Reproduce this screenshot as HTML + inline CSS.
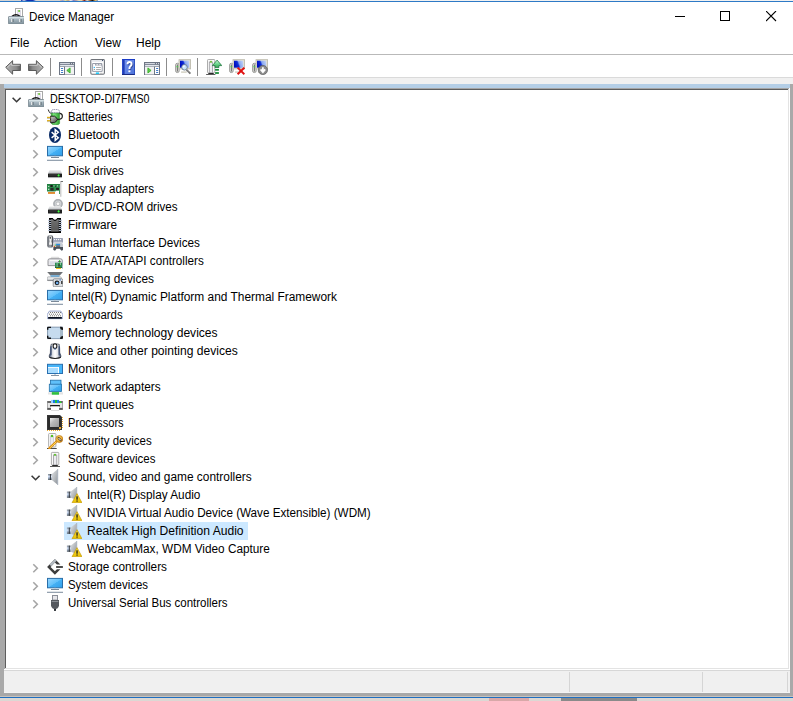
<!DOCTYPE html>
<html><head><meta charset="utf-8">
<style>
html,body{margin:0;padding:0;width:793px;height:701px;overflow:hidden;background:#fff;position:relative;font-family:"Liberation Sans",sans-serif;font-size:12px;color:#000}
div,svg{position:absolute}
.t{white-space:nowrap;transform-origin:0 0;line-height:18px;height:18px;color:#000}
.sel{left:64px;width:184px;height:18px;background:#cce8ff}
.ic{width:16px;height:16px}
.ic svg{position:absolute;left:0;top:0}
</style></head><body>
<svg width="0" height="0" style="position:absolute;left:0;top:0"><defs>
<linearGradient id="tb" x1="0" y1="0" x2="0" y2="1"><stop offset="0" stop-color="#c9d6dc"/><stop offset="0.35" stop-color="#a9b9c2"/><stop offset="1" stop-color="#7f909a"/></linearGradient>
<linearGradient id="bg1" x1="0" y1="0" x2="1" y2="0"><stop offset="0" stop-color="#2aa02a"/><stop offset="0.3" stop-color="#7de87d"/><stop offset="1" stop-color="#2f9f2f"/></linearGradient>
<linearGradient id="pg1" x1="0" y1="0" x2="1" y2="1"><stop offset="0" stop-color="#d8d8d8"/><stop offset="1" stop-color="#3a3a3a"/></linearGradient>
<linearGradient id="mg" x1="0" y1="0" x2="1" y2="1"><stop offset="0" stop-color="#9ad6ff"/><stop offset="0.5" stop-color="#60c0fa"/><stop offset="0.52" stop-color="#45b0f4"/><stop offset="1" stop-color="#2f9fea"/></linearGradient>
<linearGradient id="drv" x1="0" y1="0" x2="0" y2="1"><stop offset="0" stop-color="#f4f4f4"/><stop offset="1" stop-color="#b8bcc0"/></linearGradient>
<linearGradient id="chipg" x1="0" y1="0" x2="1" y2="1"><stop offset="0" stop-color="#f0f0f0"/><stop offset="0.4" stop-color="#b8b8b8"/><stop offset="1" stop-color="#9a9a9a"/></linearGradient>
<linearGradient id="cone" x1="0" y1="0" x2="1" y2="1"><stop offset="0" stop-color="#e4e6e8"/><stop offset="0.5" stop-color="#b8bcc0"/><stop offset="1" stop-color="#8a9096"/></linearGradient>
<linearGradient id="rear" x1="0" y1="0" x2="0" y2="1"><stop offset="0" stop-color="#7a848e"/><stop offset="0.4" stop-color="#d8e4f8"/><stop offset="0.55" stop-color="#b8c8e0"/><stop offset="1" stop-color="#5a646e"/></linearGradient>
<linearGradient id="warn" x1="0" y1="0" x2="0" y2="1"><stop offset="0" stop-color="#f8e040"/><stop offset="1" stop-color="#e8c000"/></linearGradient>
<linearGradient id="usbg" x1="0" y1="0" x2="1" y2="0"><stop offset="0" stop-color="#3c3c3c"/><stop offset="0.5" stop-color="#8a8a8a"/><stop offset="1" stop-color="#3c3c3c"/></linearGradient>
<linearGradient id="gold" x1="0" y1="0" x2="1" y2="1"><stop offset="0" stop-color="#ffe070"/><stop offset="1" stop-color="#e09010"/></linearGradient>
<linearGradient id="tower" x1="0" y1="0" x2="1" y2="0"><stop offset="0" stop-color="#d8d8d8"/><stop offset="0.5" stop-color="#fafafa"/><stop offset="1" stop-color="#c0c0c0"/></linearGradient>
<linearGradient id="scr" x1="0" y1="0.3" x2="1" y2="0"><stop offset="0" stop-color="#0010c0"/><stop offset="0.35" stop-color="#1030d8"/><stop offset="0.5" stop-color="#8aa8f0"/><stop offset="1" stop-color="#c8d8f8"/></linearGradient>
<linearGradient id="grarr" x1="0" y1="0" x2="0" y2="1"><stop offset="0" stop-color="#d0f8dc"/><stop offset="0.5" stop-color="#70d890"/><stop offset="1" stop-color="#30a050"/></linearGradient>
<linearGradient id="arrg" x1="0" y1="0" x2="1" y2="0"><stop offset="0" stop-color="#b4b4b4"/><stop offset="0.7" stop-color="#8a8a8a"/><stop offset="1" stop-color="#5a5a5a"/></linearGradient>
<linearGradient id="helpg" x1="0" y1="0" x2="1" y2="1"><stop offset="0" stop-color="#7a98f0"/><stop offset="1" stop-color="#4a70d8"/></linearGradient>
<linearGradient id="mouseg" x1="0" y1="0" x2="1" y2="0"><stop offset="0" stop-color="#3a4a6a"/><stop offset="0.3" stop-color="#e4e6ea"/><stop offset="0.5" stop-color="#ffffff"/><stop offset="0.7" stop-color="#e4e6ea"/><stop offset="1" stop-color="#3a4a6a"/></linearGradient>
<linearGradient id="hidm" x1="0" y1="0" x2="1" y2="0"><stop offset="0" stop-color="#5a5e66"/><stop offset="0.5" stop-color="#a0a4aa"/><stop offset="1" stop-color="#3a3e46"/></linearGradient>
<linearGradient id="fwg" x1="0" y1="0" x2="0" y2="1"><stop offset="0" stop-color="#8a8a8a"/><stop offset="0.2" stop-color="#6a6a6a"/><stop offset="0.85" stop-color="#5a5a5a"/><stop offset="1" stop-color="#8a8a8a"/></linearGradient>
<linearGradient id="stg" x1="0.2" y1="0.1" x2="0.5" y2="0.4"><stop offset="0" stop-color="#e0e6ec"/><stop offset="0.4" stop-color="#8a8e92"/><stop offset="0.6" stop-color="#3c3c3c"/><stop offset="1" stop-color="#3a3a3a"/></linearGradient>
</defs></svg>
<!-- background row 0 -->
<div style="left:0;top:0;width:793px;height:1px;background:#f2f2f2"></div>
<div style="left:0;top:0;width:60px;height:1px;background:#d4d4d4"></div>
<div style="left:21px;top:0;width:15px;height:1px;background:linear-gradient(90deg,#1030b0,#c8d0e0 20%,#1030b0 40%,#1030b0 80%,#d0d8e8)"></div>
<div style="left:60px;top:0;width:38px;height:1px;background:linear-gradient(90deg,#e0c0a0,#a0a0d0,#e0e0a0,#c0a080,#f0f0f0,#8080c0,#c0a0a0,#e0e0c0,#f0d0a0,#802020,#e0e0d0,#a06030,#101010,#e0b060,#80a0c0)"></div>
<div style="left:0;top:1px;width:793px;height:1px;background:#2e7ac6"></div>
<!-- title bar -->
<div class="ic" style="left:8px;top:8px"><svg width="16" height="16" viewBox="0 0 16 16">
<rect x="7.5" y="0.5" width="7" height="8" fill="#fff" stroke="#a8a8a8"/>
<rect x="9.6" y="2.6" width="3" height="5.6" fill="#ece8f4" stroke="#c8c4d4" stroke-width="0.5"/>
<circle cx="11.1" cy="3" r="1.05" fill="#70c838"/>
<path d="M4 8.2 Q8 5.2 12 8.2" fill="none" stroke="#151515" stroke-width="1.4"/>
<rect x="0.5" y="8.5" width="15.5" height="7.5" rx="0.5" fill="url(#tb)" stroke="#7a8890" stroke-width="0.8"/>
<rect x="1" y="9" width="15" height="1.4" fill="#dbe6ea" opacity="0.8"/>
<rect x="3.2" y="11" width="1.4" height="3" fill="#f4f4f4"/>
<rect x="11.2" y="11" width="1.4" height="3" fill="#f4f4f4"/>
<rect x="4.6" y="11" width="0.8" height="3" fill="#4a5860"/>
<rect x="12.6" y="11" width="0.8" height="3" fill="#4a5860"/>
</svg></div>
<div class="t" style="left:29px;top:8px;transform:scaleX(0.973)">Device Manager</div>
<div style="left:675px;top:16px;width:10px;height:1px;background:#000"></div>
<svg style="left:720px;top:11px" width="11" height="11"><rect x="0.5" y="0.5" width="9" height="9" fill="none" stroke="#000" stroke-width="1"/></svg>
<svg style="left:766px;top:11px" width="11" height="11"><path d="M0 0 L10 10 M10 0 L0 10" stroke="#000" stroke-width="1.1"/></svg>
<!-- menu -->
<div class="t" style="left:10px;top:34px">File</div>
<div class="t" style="left:44px;top:34px">Action</div>
<div class="t" style="left:95px;top:34px">View</div>
<div class="t" style="left:136px;top:34px">Help</div>
<div style="left:0;top:54px;width:793px;height:1px;background:#b9b9b9"></div>
<!-- toolbar -->
<svg style="left:5px;top:60px" width="16" height="15" viewBox="0 0 16 15"><path d="M0.7 7.3 L7.6 0.7 L7.6 4.3 L15.3 4.3 Q15.9 4.3 15.9 5 L15.9 9.8 Q15.9 10.5 15.3 10.5 L7.6 10.5 L7.6 14.2 Z" fill="url(#arrg)" stroke="#5a5a5a" stroke-width="1" stroke-linejoin="round"/><path d="M2.3 7.3 L6.6 3.2 L6.6 5.3 L14.8 5.3" fill="none" stroke="#e0e0e0" stroke-width="0.7"/></svg><svg style="left:28px;top:60px" width="16" height="15" viewBox="0 0 16 15"><g transform="translate(16,0) scale(-1,1)"><path d="M0.7 7.3 L7.6 0.7 L7.6 4.3 L15.3 4.3 Q15.9 4.3 15.9 5 L15.9 9.8 Q15.9 10.5 15.3 10.5 L7.6 10.5 L7.6 14.2 Z" fill="url(#arrg)" stroke="#5a5a5a" stroke-width="1" stroke-linejoin="round"/><path d="M2.3 7.3 L6.6 3.2 L6.6 5.3 L14.8 5.3" fill="none" stroke="#e0e0e0" stroke-width="0.7"/></g></svg><div style="left:50px;top:58px;width:1px;height:18px;background:#8c8c8c"></div><svg style="left:59px;top:62px" width="16" height="13" viewBox="0 0 16 13"><rect x="0.5" y="0.5" width="15" height="12" fill="#fff" stroke="#6e7684"/>
<rect x="1" y="1" width="14" height="3.8" fill="#6e7684"/>
<rect x="1.1" y="1.1" width="9.8" height="1" fill="#dfe3ea"/><rect x="12" y="1.1" width="1" height="1" fill="#dfe3ea"/><rect x="14" y="1.1" width="1" height="1" fill="#dfe3ea"/>
<rect x="1.1" y="2.9" width="13.8" height="1.3" fill="#e4e8ee"/>
<rect x="5" y="4.8" width="1" height="7.7" fill="#6e7684"/>
<rect x="6" y="4.8" width="9" height="7.7" fill="#f2f2f2"/>
<rect x="1.9" y="6" width="2.3" height="1" rx="0.5" fill="#3a78c8"/><rect x="1.9" y="8" width="2.3" height="1" rx="0.5" fill="#3a78c8"/><rect x="1.9" y="10" width="2.3" height="1" rx="0.5" fill="#3a78c8"/>
<path d="M7.8 8.45 L11.1 5.9 L11.1 11 Z" fill="#60c850" stroke="#30b020" stroke-width="0.8" stroke-linejoin="round"/></svg><div style="left:81px;top:58px;width:1px;height:18px;background:#8c8c8c"></div><svg style="left:90px;top:59px" width="15" height="16" viewBox="0 0 15 16"><rect x="0.8" y="0.5" width="13.6" height="14.7" rx="1.2" fill="#fff" stroke="#6e7278" stroke-width="1.1"/>
<rect x="1.4" y="1.3" width="12.4" height="1.3" fill="#dde0e6"/><rect x="12" y="0.9" width="1.1" height="1.1" fill="#405070"/>
<path d="M2.6 4.5 L11.9 4.5 L11.9 6.6 L12.2 6.6 L12.2 12.4 L2.6 12.4 Z" fill="#fff" stroke="#9a9eaa" stroke-width="1"/>
<rect x="5.1" y="4.5" width="6.8" height="2.1" fill="#9a9eaa"/>
<rect x="6.3" y="5.3" width="1.8" height="1" fill="#fff"/><rect x="9.2" y="5.3" width="1.8" height="1" fill="#fff"/>
<circle cx="4.3" cy="8.5" r="0.65" fill="#10b0f8"/><rect x="6.1" y="8.1" width="4.8" height="0.8" fill="#9a9a9a"/>
<circle cx="4.3" cy="10.5" r="0.55" fill="#6a6a6a"/><rect x="6.1" y="10.1" width="4.8" height="0.8" fill="#9a9a9a"/>
<rect x="5.9" y="13.4" width="3.2" height="1.6" fill="#20c8f8"/><rect x="10" y="13.8" width="2.6" height="1" fill="#b8b8b8"/></svg><div style="left:112px;top:58px;width:1px;height:18px;background:#8c8c8c"></div><svg style="left:122px;top:59px" width="13" height="16" viewBox="0 0 13 16"><rect x="0" y="0" width="13" height="16" fill="url(#helpg)"/>
<rect x="0" y="0" width="2.7" height="16" fill="#2848c8"/><rect x="1.2" y="0" width="1" height="16" fill="#1c34a0" opacity="0.6"/>
<rect x="0" y="0" width="13" height="1" fill="#1a3cc8"/><rect x="0" y="15" width="13" height="1" fill="#1a2a80"/>
<rect x="12.3" y="0" width="0.7" height="16" fill="#2040b0"/>
<path d="M5.8 5.6 Q5.8 3.3 7.8 3.3 Q9.9 3.3 9.9 5.4 Q9.9 6.8 8.5 7.7 Q7.7 8.3 7.7 10.3" fill="none" stroke="#1a2a70" stroke-width="1.9" transform="translate(0.6,0.6)" opacity="0.6"/>
<path d="M5.5 5.3 Q5.5 3 7.5 3 Q9.6 3 9.6 5.1 Q9.6 6.5 8.2 7.4 Q7.4 8 7.4 10" fill="none" stroke="#fff" stroke-width="1.9"/>
<rect x="6.4" y="11.4" width="2" height="1.8" fill="#fff"/></svg><svg style="left:144px;top:62px" width="16" height="13" viewBox="0 0 16 13"><rect x="0.5" y="0.5" width="15" height="12" fill="#fff" stroke="#6e7684"/>
<rect x="1" y="1" width="14" height="3.8" fill="#6e7684"/>
<rect x="1.1" y="1.1" width="9.8" height="1" fill="#dfe3ea"/><rect x="12" y="1.1" width="1" height="1" fill="#dfe3ea"/><rect x="14" y="1.1" width="1" height="1" fill="#dfe3ea"/>
<rect x="1.1" y="2.9" width="13.8" height="1.3" fill="#e4e8ee"/>
<rect x="10" y="4.8" width="1" height="7.7" fill="#6e7684"/>
<rect x="1" y="4.8" width="9" height="7.7" fill="#f2f2f2"/>
<rect x="12" y="6" width="2.3" height="1" rx="0.5" fill="#3a78c8"/><rect x="12" y="8" width="2.3" height="1" rx="0.5" fill="#3a78c8"/><rect x="12" y="10" width="2.3" height="1" rx="0.5" fill="#3a78c8"/>
<path d="M7.1 8.45 L3.9 5.9 L3.9 11 Z" fill="#60c850" stroke="#30b020" stroke-width="0.8" stroke-linejoin="round"/></svg><div style="left:166px;top:58px;width:1px;height:18px;background:#8c8c8c"></div><svg style="left:175px;top:59px" width="16" height="16" viewBox="0 0 16 16"><rect x="0.6" y="4.3" width="3.6" height="9.2" rx="1.6" fill="#dcdcd8" stroke="#8a8a88" stroke-width="0.8"/><rect x="1.9" y="5.5" width="1" height="7" fill="#707070"/><rect x="1.4" y="7.3" width="2" height="0.9" fill="#40e040"/>
<rect x="4" y="0.7" width="11.6" height="9.2" fill="#e4e2d4" stroke="#b8b6a8" stroke-width="0.8"/><rect x="5" y="1.7" width="9.2" height="7" fill="url(#scr)"/>
<rect x="6.1" y="12.4" width="5.6" height="1.4" fill="#d0cec0"/>
<path d="M11.6 10.8 L15.4 14.6" stroke="#6a6a6a" stroke-width="1.8"/><path d="M12.2 11.6 L14.8 14" stroke="#e0e0e0" stroke-width="0.5" stroke-dasharray="0.8 0.8"/>
<circle cx="9.5" cy="8.3" r="2.8" fill="#c8e4fa" stroke="#6a7a8a" stroke-width="0.9"/><circle cx="8.7" cy="7.5" r="1.1" fill="#fff" opacity="0.8"/></svg><div style="left:197px;top:58px;width:1px;height:18px;background:#8c8c8c"></div><svg style="left:206px;top:59px" width="16" height="16" viewBox="0 0 16 16"><rect x="1.5" y="0.5" width="7.3" height="13.3" rx="0.8" fill="#fafafa" stroke="#a4a4a4" stroke-width="0.9"/>
<rect x="3.3" y="3" width="3.2" height="10.8" fill="#ececf0" stroke="#9a9a9e" stroke-width="0.8"/>
<circle cx="5" cy="2.7" r="1" fill="#70c030"/>
<rect x="2.3" y="14" width="5.4" height="1" fill="#2a2a2a"/><rect x="0.1" y="15" width="9.3" height="0.9" fill="#4a4a4a"/>
<path d="M11.1 1.1 L15.8 6.6 L12.9 6.6 L12.9 8.6 L9.1 8.6 L9.1 6.6 L6.4 6.6 Z" fill="url(#grarr)" stroke="#106a30" stroke-width="0.7" stroke-linejoin="round"/>
<rect x="9.1" y="10" width="3.8" height="1.7" fill="#188a38"/><rect x="9.1" y="13.1" width="3.8" height="1.8" fill="#188a38"/></svg><svg style="left:229px;top:59px" width="16" height="16" viewBox="0 0 16 16"><rect x="0.6" y="4.3" width="3.6" height="9.2" rx="1.6" fill="#dcdcd8" stroke="#8a8a88" stroke-width="0.8"/><rect x="1.9" y="5.5" width="1" height="7" fill="#707070"/><rect x="1.4" y="7.3" width="2" height="0.9" fill="#40e040"/>
<rect x="4" y="0.7" width="11.6" height="9.2" fill="#e4e2d4" stroke="#b8b6a8" stroke-width="0.8"/><rect x="5" y="1.7" width="9.2" height="7" fill="url(#scr)"/>
<rect x="6.1" y="12.4" width="5.6" height="1.4" fill="#d0cec0"/>
<path d="M8.6 8.6 L15.4 15.2 M15.4 8.6 L8.6 15.2" stroke="#e01010" stroke-width="2"/></svg><svg style="left:252px;top:59px" width="16" height="16" viewBox="0 0 16 16"><rect x="0.6" y="4.3" width="3.6" height="9.2" rx="1.6" fill="#dcdcd8" stroke="#8a8a88" stroke-width="0.8"/><rect x="1.9" y="5.5" width="1" height="7" fill="#707070"/><rect x="1.4" y="7.3" width="2" height="0.9" fill="#40e040"/>
<rect x="4" y="0.7" width="11.6" height="9.2" fill="#e4e2d4" stroke="#b8b6a8" stroke-width="0.8"/><rect x="5" y="1.7" width="9.2" height="7" fill="url(#scr)"/>
<rect x="6.1" y="12.4" width="5.6" height="1.4" fill="#d0cec0"/>
<circle cx="10.9" cy="11" r="4.6" fill="#8c8c8c" stroke="#5a5a5a" stroke-width="0.7"/>
<path d="M10.9 8.2 L10.9 12 M8.6 10.4 L10.9 13.2 L13.2 10.4" fill="none" stroke="#fff" stroke-width="1.7"/></svg>
<div style="left:0;top:77px;width:793px;height:1px;background:#dadada"></div>
<div style="left:0;top:78px;width:793px;height:6px;background:#f0f0f0"></div>
<div style="left:0;top:84px;width:4px;height:609px;background:#a9a9a9"></div>
<div style="left:790px;top:84px;width:3px;height:609px;background:#a9a9a9"></div>
<div style="left:4px;top:84px;width:786px;height:4px;background:#b4cee6"></div>
<div style="left:4px;top:88px;width:785px;height:1px;background:#a4a4a4"></div>
<div style="left:4px;top:88px;width:1px;height:582px;background:#a9a9a9"></div>
<!-- tree frame -->
<div style="left:5px;top:89px;width:783px;height:1px;background:#5e5e5e"></div>
<div style="left:5px;top:89px;width:1px;height:580px;background:#5e5e5e"></div>
<div style="left:6px;top:90px;width:782px;height:578px;background:#fff"></div>
<div style="left:788px;top:89px;width:1px;height:580px;background:#e3e3e3"></div>
<div style="left:5px;top:668px;width:784px;height:1px;background:#e3e3e3"></div>
<div style="left:789px;top:88px;width:1px;height:582px;background:#fff"></div>
<div style="left:4px;top:669px;width:786px;height:1px;background:#fff"></div>
<!-- tree rows -->
<svg class="chev" style="left:12px;top:97px" width="10" height="7" viewBox="0 0 10 7"><path d="M0.6 0.7 L4.6 4.7 L8.6 0.7" fill="none" stroke="#3a3a3a" stroke-width="1.6"/></svg><div class="ic" style="left:28px;top:91px"><svg width="16" height="16" viewBox="0 0 16 16">
<rect x="7.5" y="0.5" width="7" height="8" fill="#fff" stroke="#a8a8a8"/>
<rect x="9.6" y="2.6" width="3" height="5.6" fill="#ece8f4" stroke="#c8c4d4" stroke-width="0.5"/>
<circle cx="11.1" cy="3" r="1.05" fill="#70c838"/>
<path d="M4 8.2 Q8 5.2 12 8.2" fill="none" stroke="#151515" stroke-width="1.4"/>
<rect x="0.5" y="8.5" width="15.5" height="7.5" rx="0.5" fill="url(#tb)" stroke="#7a8890" stroke-width="0.8"/>
<rect x="1" y="9" width="15" height="1.4" fill="#dbe6ea" opacity="0.8"/>
<rect x="3.2" y="11" width="1.4" height="3" fill="#f4f4f4"/>
<rect x="11.2" y="11" width="1.4" height="3" fill="#f4f4f4"/>
<rect x="4.6" y="11" width="0.8" height="3" fill="#4a5860"/>
<rect x="12.6" y="11" width="0.8" height="3" fill="#4a5860"/>
</svg></div><div class="t" style="left:49.5px;top:90px;transform:scaleX(0.8899)">DESKTOP-DI7FMS0</div>
<svg class="chev" style="left:32px;top:113px" width="7" height="10" viewBox="0 0 7 10"><path d="M1.3 1.3 L5.3 5.3 L1.3 9.3" fill="none" stroke="#a6a6a6" stroke-width="1.6"/></svg><div class="ic" style="left:47px;top:109px"><svg width="16" height="16" viewBox="0 0 16 16">
<path d="M1.2 0.5 Q1.8 3 3.8 4.6" fill="none" stroke="#2a2a2a" stroke-width="1"/>
<path d="M4.2 3.6 L12.6 3.6 L12.6 14.2 Q12.6 15.7 8.5 15.7 Q4.4 15.7 4.4 14.2 Z" fill="url(#bg1)" stroke="#2a8a2a" stroke-width="0.5"/>
<path d="M4.2 2.6 Q4.2 0.4 8.4 0.4 Q12.6 0.4 12.6 2.6 L12.6 3.8 L4.2 3.8 Z" fill="#fbfaff" stroke="#3a3a6a" stroke-width="0.6" stroke-dasharray="1.2 0.6"/>
<path d="M10.4 10.4 L13 10.2 Q15.6 9.6 15.3 6.6 Q15 4.4 12.6 4.4" fill="none" stroke="#1e1e1e" stroke-width="1.2"/>
<path d="M3.6 7.2 L7.6 7.2 L10 9.4 L10.6 10.4 L10 11.5 L7.6 13.7 L3.6 13.7 Z" fill="url(#pg1)" stroke="#0e0e0e" stroke-width="0.9"/>
<rect x="0" y="7.8" width="3.4" height="1.5" fill="#e0b020"/>
<rect x="0" y="11" width="3.4" height="1.5" fill="#e0b020"/>
<rect x="0" y="9.3" width="3.4" height="0.6" fill="#8090b0" opacity="0.6"/>
<rect x="0" y="12.5" width="3.4" height="0.6" fill="#8090b0" opacity="0.6"/>
</svg></div><div class="t" style="left:68px;top:108px;transform:scaleX(0.9417)">Batteries</div>
<svg class="chev" style="left:32px;top:131px" width="7" height="10" viewBox="0 0 7 10"><path d="M1.3 1.3 L5.3 5.3 L1.3 9.3" fill="none" stroke="#a6a6a6" stroke-width="1.6"/></svg><div class="ic" style="left:47px;top:127px"><svg width="16" height="16" viewBox="0 0 16 16">
<ellipse cx="8" cy="8" rx="6" ry="8" fill="#082a66"/>
<path d="M4.6 5.1 L11.3 10.7 L8.2 13.4 L8.2 2.6 L11.3 5.3 L4.6 10.9" fill="none" stroke="#fff" stroke-width="1.45" stroke-linejoin="miter" stroke-miterlimit="3"/>
</svg></div><div class="t" style="left:68px;top:126px;transform:scaleX(1.0174)">Bluetooth</div>
<svg class="chev" style="left:32px;top:149px" width="7" height="10" viewBox="0 0 7 10"><path d="M1.3 1.3 L5.3 5.3 L1.3 9.3" fill="none" stroke="#a6a6a6" stroke-width="1.6"/></svg><div class="ic" style="left:47px;top:145px"><svg width="16" height="16" viewBox="0 0 16 16">
<rect x="0.5" y="1.4" width="15" height="9.4" fill="url(#mg)" stroke="#2a6ea8"/>
<rect x="7" y="10.9" width="2" height="1" fill="#c0c8d0"/>
<rect x="4" y="12" width="8" height="1" fill="#7a8898"/>
<rect x="0" y="14.3" width="16" height="0.8" fill="#d4dae0"/>
<rect x="0" y="15.1" width="16" height="0.9" fill="#8a98a8"/>
</svg></div><div class="t" style="left:68px;top:144px;transform:scaleX(1.0268)">Computer</div>
<svg class="chev" style="left:32px;top:167px" width="7" height="10" viewBox="0 0 7 10"><path d="M1.3 1.3 L5.3 5.3 L1.3 9.3" fill="none" stroke="#a6a6a6" stroke-width="1.6"/></svg><div class="ic" style="left:47px;top:163px"><svg width="16" height="16" viewBox="0 0 16 16">
<path d="M2.5 7 L13.5 7 L15 10.5 L1 10.5 Z" fill="url(#drv)"/>
<rect x="1" y="10.5" width="14" height="4" rx="0.6" fill="#1e1e1e"/>
<rect x="2" y="11.4" width="8" height="0.5" fill="#444"/><rect x="2" y="12.6" width="8" height="0.5" fill="#444"/>
<circle cx="11.6" cy="12.4" r="1.1" fill="#40ff40"/>
<rect x="1" y="14.5" width="14" height="0.6" fill="#c8ccd0"/>
</svg></div><div class="t" style="left:68px;top:162px;transform:scaleX(0.9491)">Disk drives</div>
<svg class="chev" style="left:32px;top:185px" width="7" height="10" viewBox="0 0 7 10"><path d="M1.3 1.3 L5.3 5.3 L1.3 9.3" fill="none" stroke="#a6a6a6" stroke-width="1.6"/></svg><div class="ic" style="left:47px;top:181px"><svg width="16" height="16" viewBox="0 0 16 16">
<rect x="13.1" y="0.6" width="2" height="15.1" fill="#e8e8e8"/>
<rect x="13.1" y="0.6" width="0.8" height="15.1" fill="#c8c8c8"/>
<rect x="13.6" y="0" width="2.4" height="1" fill="#707070"/>
<path d="M0 3 L12.9 3 L12.9 12.9 L12 12.9 L12 9.7 L9 9.7 L8.4 10.6 L0 10.6 Z" fill="#2a8a4a"/>
<rect x="0" y="3" width="12.9" height="0.8" fill="#1e7a3a"/>
<rect x="1" y="11" width="7" height="1.9" fill="#e08a30"/>
<rect x="3.4" y="4" width="2.3" height="2" fill="#1a1a1a"/>
<rect x="3.4" y="6.9" width="3.2" height="2.8" fill="#2a2a2a"/>
<rect x="9.1" y="6.9" width="2.9" height="2" fill="#1e1e1e"/>
<rect x="8" y="4.8" width="0.9" height="0.9" fill="#1a1a1a"/>
<g fill="#c8e8d0"><rect x="1.1" y="4.9" width="1.2" height="1.1"/><rect x="1.1" y="7.7" width="1.2" height="1.3"/><rect x="6.6" y="4.3" width="0.8" height="1.1"/><rect x="10" y="4.3" width="0.8" height="1.1"/></g>
</svg></div><div class="t" style="left:68px;top:180px;transform:scaleX(0.9621)">Display adapters</div>
<svg class="chev" style="left:32px;top:203px" width="7" height="10" viewBox="0 0 7 10"><path d="M1.3 1.3 L5.3 5.3 L1.3 9.3" fill="none" stroke="#a6a6a6" stroke-width="1.6"/></svg><div class="ic" style="left:47px;top:199px"><svg width="16" height="16" viewBox="0 0 16 16">
<circle cx="11" cy="4.8" r="4.5" fill="#b4b8bc" stroke="#8a8e92" stroke-width="0.5"/>
<circle cx="11" cy="4.8" r="3" fill="#d8dadc"/>
<circle cx="11" cy="4.8" r="1.9" fill="#eeeeee" stroke="#9a9ea2" stroke-width="0.5"/>
<circle cx="11" cy="4.8" r="0.9" fill="#fff"/>
<path d="M2.5 7.2 L13.5 7.2 L15 10.5 L1 10.5 Z" fill="url(#drv)"/>
<rect x="1" y="10.5" width="14" height="4" rx="0.6" fill="#1e1e1e"/>
<rect x="2" y="11.4" width="8" height="0.5" fill="#444"/><rect x="2" y="12.6" width="8" height="0.5" fill="#444"/>
<circle cx="11.6" cy="12.4" r="1.1" fill="#40ff40"/>
</svg></div><div class="t" style="left:68px;top:198px;transform:scaleX(0.9670)">DVD/CD-ROM drives</div>
<svg class="chev" style="left:32px;top:221px" width="7" height="10" viewBox="0 0 7 10"><path d="M1.3 1.3 L5.3 5.3 L1.3 9.3" fill="none" stroke="#a6a6a6" stroke-width="1.6"/></svg><div class="ic" style="left:47px;top:217px"><svg width="16" height="16" viewBox="0 0 16 16">
<path d="M2 0.9 L5.7 0.9 Q8 4.6 10.3 0.9 L14 0.9 L14 16 L2 16 Z" fill="#000"/>
<path d="M4.1 2.3 L5.3 2.3 Q8 5.8 10.7 2.3 L11.7 2.3 L11.7 14.6 L4.1 14.6 Z" fill="url(#fwg)"/>
<rect x="1" y="2.8" width="3.2" height="1" fill="#b8c4d8"/><rect x="11.8" y="2.8" width="3.2" height="1" fill="#b8c4d8"/><rect x="1" y="4.9" width="3.2" height="1" fill="#b8c4d8"/><rect x="11.8" y="4.9" width="3.2" height="1" fill="#b8c4d8"/><rect x="1" y="6.9" width="3.2" height="1" fill="#b8c4d8"/><rect x="11.8" y="6.9" width="3.2" height="1" fill="#b8c4d8"/><rect x="1" y="8.9" width="3.2" height="1" fill="#b8c4d8"/><rect x="11.8" y="8.9" width="3.2" height="1" fill="#b8c4d8"/><rect x="1" y="10.9" width="3.2" height="1" fill="#b8c4d8"/><rect x="11.8" y="10.9" width="3.2" height="1" fill="#b8c4d8"/><rect x="1" y="13.1" width="3.2" height="1" fill="#b8c4d8"/><rect x="11.8" y="13.1" width="3.2" height="1" fill="#b8c4d8"/></svg></div><div class="t" style="left:68px;top:216px;transform:scaleX(0.9800)">Firmware</div>
<svg class="chev" style="left:32px;top:239px" width="7" height="10" viewBox="0 0 7 10"><path d="M1.3 1.3 L5.3 5.3 L1.3 9.3" fill="none" stroke="#a6a6a6" stroke-width="1.6"/></svg><div class="ic" style="left:47px;top:235px"><svg width="16" height="16" viewBox="0 0 16 16">
<rect x="0.2" y="0.2" width="6" height="12.6" rx="2.4" fill="url(#hidm)"/>
<path d="M2.2 1.6 L4.8 1.6 Q5 5 4.3 6.5 Q5 8 5 9.8 L2 9.8 Q2 8 2.7 6.5 Q2 5 2.2 1.6 Z" fill="#f4f4f4"/>
<rect x="2.6" y="2.2" width="1.4" height="1.4" fill="#333"/>
<rect x="6" y="2.9" width="10" height="4.9" rx="0.8" fill="#9aa0b4"/>
<g fill="#fff"><circle cx="7.5" cy="4.6" r="0.7"/><circle cx="9.5" cy="4.6" r="0.7"/><circle cx="11.5" cy="4.6" r="0.7"/><circle cx="13.5" cy="4.6" r="0.7"/>
<path d="M7 7.5 L8 6.4 L9 7.5 L10 6.4 L11 7.5 L12 6.4 L13 7.5 L14 6.4 L15 7.5 Z"/></g>
<path d="M6.5 9.5 Q6.5 8 8 8 L14.5 8 Q16 8 16 9.5 L16 14.8 Q15.5 15.8 14.3 15.5 L12.8 13.8 L9.5 13.8 L8.2 15.5 Q7 15.8 6.3 14.8 Z" fill="#c8ccd2"/>
<path d="M6.5 12 L16 12 L16 14.8 Q15.5 15.8 14.3 15.5 L12.8 13.8 L9.5 13.8 L8.2 15.5 Q7 15.8 6.3 14.8 Z" fill="#4a5058"/>
<rect x="9.1" y="8.8" width="4" height="1.6" fill="#2a90e0"/>
<rect x="9.1" y="10.4" width="4" height="1.4" fill="#505860"/>
<circle cx="7.4" cy="11.4" r="0.7" fill="#f06010"/><circle cx="8.4" cy="10.1" r="0.6" fill="#40d040"/>
</svg></div><div class="t" style="left:68px;top:234px;transform:scaleX(0.9797)">Human Interface Devices</div>
<svg class="chev" style="left:32px;top:257px" width="7" height="10" viewBox="0 0 7 10"><path d="M1.3 1.3 L5.3 5.3 L1.3 9.3" fill="none" stroke="#a6a6a6" stroke-width="1.6"/></svg><div class="ic" style="left:47px;top:253px"><svg width="16" height="16" viewBox="0 0 16 16">
<rect x="4" y="4.1" width="8" height="1.8" rx="0.8" fill="#e4e4e4" stroke="#c8c8c8" stroke-width="0.4"/>
<path d="M1 12.6 L1 7.5 Q1 5.8 2.7 5.8 L13.5 5.8 Q15.3 5.8 15.3 7.5 L15.3 12.6 Z" fill="#e8e8ec" stroke="#8a8a8e" stroke-width="0.9"/>
<rect x="3" y="7.3" width="9.5" height="1" fill="#fff"/>
<rect x="3" y="8.3" width="9.5" height="3.5" fill="#dadce6"/>
<rect x="15" y="7" width="0.7" height="9" fill="#a8b0c0"/>
<rect x="8" y="9.7" width="7.1" height="5.2" fill="#2a8a50"/>
<rect x="8" y="14" width="7.1" height="0.9" fill="#1a5a3a"/>
<rect x="9" y="14.9" width="5" height="1.1" fill="#f0c020"/>
<rect x="12" y="7.1" width="1.1" height="2.6" fill="#50e040"/>
<rect x="11" y="8" width="3" height="1" fill="#404050" opacity="0.6"/>
<g fill="#e0f0e0"><rect x="9.6" y="10.5" width="1" height="1"/><rect x="9.6" y="12.6" width="1" height="1"/><rect x="13" y="10.5" width="1" height="1"/></g>
<rect x="11.3" y="11.6" width="1.6" height="1" fill="#501020"/>
</svg></div><div class="t" style="left:68px;top:252px;transform:scaleX(0.9759)">IDE ATA/ATAPI controllers</div>
<svg class="chev" style="left:32px;top:275px" width="7" height="10" viewBox="0 0 7 10"><path d="M1.3 1.3 L5.3 5.3 L1.3 9.3" fill="none" stroke="#a6a6a6" stroke-width="1.6"/></svg><div class="ic" style="left:47px;top:271px"><svg width="16" height="16" viewBox="0 0 16 16">
<path d="M0.2 1.1 L15.9 1.1 L12.9 4.5 L3.4 4.5 Z" fill="#6e7276"/>
<rect x="3.6" y="4.5" width="8.8" height="1.5" fill="#40a8f0"/>
<rect x="0.3" y="5.8" width="14" height="3.8" rx="0.8" fill="#e6e8ea" stroke="#8a8e92" stroke-width="0.5"/>
<rect x="0.3" y="8.8" width="6" height="0.8" fill="#6a6e72"/>
<rect x="6.2" y="7.8" width="9.6" height="8" rx="1.2" fill="#dcdfe2" stroke="#5a6066" stroke-width="0.6"/>
<circle cx="10" cy="11.8" r="2.4" fill="#1a1e22"/>
<circle cx="10.2" cy="12" r="1.3" fill="#70b0f0"/>
<rect x="14.2" y="10" width="1.2" height="3" fill="#222"/>
<rect x="12.5" y="8.5" width="1.5" height="1" fill="#3a7ad0"/>
</svg></div><div class="t" style="left:68px;top:270px;transform:scaleX(0.9917)">Imaging devices</div>
<svg class="chev" style="left:32px;top:293px" width="7" height="10" viewBox="0 0 7 10"><path d="M1.3 1.3 L5.3 5.3 L1.3 9.3" fill="none" stroke="#a6a6a6" stroke-width="1.6"/></svg><div class="ic" style="left:47px;top:289px"><svg width="16" height="16" viewBox="0 0 16 16">
<rect x="0.5" y="1.4" width="15" height="9.4" fill="url(#mg)" stroke="#2a6ea8"/>
<rect x="7" y="10.9" width="2" height="1" fill="#c0c8d0"/>
<rect x="4" y="12" width="8" height="1" fill="#7a8898"/>
<rect x="0" y="14.3" width="16" height="0.8" fill="#d4dae0"/>
<rect x="0" y="15.1" width="16" height="0.9" fill="#8a98a8"/>
</svg></div><div class="t" style="left:68px;top:288px;transform:scaleX(0.9919)">Intel(R) Dynamic Platform and Thermal Framework</div>
<svg class="chev" style="left:32px;top:311px" width="7" height="10" viewBox="0 0 7 10"><path d="M1.3 1.3 L5.3 5.3 L1.3 9.3" fill="none" stroke="#a6a6a6" stroke-width="1.6"/></svg><div class="ic" style="left:47px;top:307px"><svg width="16" height="16" viewBox="0 0 16 16">
<path d="M2.4 4.1 L13.8 4.1 L15.8 7.5 L15.8 11 Q15.8 11.7 15 11.7 L1 11.7 Q0.2 11.7 0.2 11 L0.2 7.5 Z" fill="#fafafa" stroke="#8090c0" stroke-width="0.8"/>
<g fill="#7a7a7a"><rect x="3" y="5" width="1" height="1"/><rect x="5" y="5" width="1" height="1"/><rect x="7" y="5" width="1" height="1"/><rect x="9" y="5" width="1" height="1"/><rect x="11" y="5" width="1" height="1"/><rect x="13" y="5" width="1" height="1"/><rect x="2" y="6.7" width="1" height="1"/><rect x="4" y="6.7" width="1" height="1"/><rect x="6" y="6.7" width="1" height="1"/><rect x="8" y="6.7" width="1" height="1"/><rect x="10" y="6.7" width="1" height="1"/><rect x="12" y="6.7" width="1" height="1"/><rect x="3" y="8.3" width="1" height="1"/><rect x="5" y="8.3" width="1" height="1"/><rect x="7" y="8.3" width="1" height="1"/><rect x="9" y="8.3" width="1" height="1"/><rect x="11" y="8.3" width="1" height="1"/><rect x="13" y="8.3" width="1" height="1"/></g>
<rect x="1" y="10" width="14" height="1.7" rx="0.6" fill="#0a1220"/>
</svg></div><div class="t" style="left:68px;top:306px;transform:scaleX(0.9516)">Keyboards</div>
<svg class="chev" style="left:32px;top:329px" width="7" height="10" viewBox="0 0 7 10"><path d="M1.3 1.3 L5.3 5.3 L1.3 9.3" fill="none" stroke="#a6a6a6" stroke-width="1.6"/></svg><div class="ic" style="left:47px;top:325px"><svg width="16" height="16" viewBox="0 0 16 16">
<rect x="0.4" y="2.1" width="15.2" height="11.6" fill="#b4cce0" stroke="#7a90a8" stroke-width="0.8"/>
<rect x="1.3" y="2.9" width="11.7" height="10" rx="1" fill="#c6dbee"/>
<rect x="13" y="2.5" width="2.8" height="10.5" fill="#a8bccc"/>
<path d="M0.7 4.8 L0.7 3 Q0.7 2.4 1.6 2.4 L4 2.4" fill="none" stroke="#111" stroke-width="1.4"/>
<path d="M0.7 10.8 L0.7 12.6 Q0.7 13.3 1.6 13.3 L4 13.3" fill="none" stroke="#111" stroke-width="1.4"/>
<path d="M13 1.7 L14.4 1.7 Q16 1.7 16 3.3 L16 4.9 Q13 4.9 13 1.7 Z" fill="#151515"/>
<path d="M13 14 L14.4 14 Q16 14 16 12.4 L16 10.9 Q13 10.9 13 14 Z" fill="#151515"/>
</svg></div><div class="t" style="left:68px;top:324px;transform:scaleX(1.0058)">Memory technology devices</div>
<svg class="chev" style="left:32px;top:347px" width="7" height="10" viewBox="0 0 7 10"><path d="M1.3 1.3 L5.3 5.3 L1.3 9.3" fill="none" stroke="#a6a6a6" stroke-width="1.6"/></svg><div class="ic" style="left:47px;top:343px"><svg width="16" height="16" viewBox="0 0 16 16">
<path d="M4 1.3 Q8 -0.3 12.3 1.3 Q12.8 6 12.8 10 Q14.3 12.8 14 14 Q13 15.7 8 15.7 Q3 15.7 2.2 14 Q1.8 12.8 3.3 10 Q3.3 6 4 1.3 Z" fill="url(#mouseg)" stroke="#2a2e38" stroke-width="0.5"/>
<path d="M3.2 3.5 Q3.7 9 2.6 13 L4.6 12 Q4.8 7 4.6 3 Z" fill="#3a4c72" opacity="0.9"/>
<path d="M13 3.5 Q12.5 9 13.6 13 L11.6 12 Q11.4 7 11.6 3 Z" fill="#3a4c72" opacity="0.9"/>
<rect x="6.2" y="1" width="3.6" height="4.3" rx="1.2" fill="#fff" stroke="#111" stroke-width="1.1"/>
<path d="M6.5 5.5 Q8 7.8 9.5 5.5" fill="#2a4a80"/>
<path d="M2.5 14.5 Q8 16.5 13.8 14.5" fill="none" stroke="#151515" stroke-width="1"/>
</svg></div><div class="t" style="left:68px;top:342px;transform:scaleX(1.0054)">Mice and other pointing devices</div>
<svg class="chev" style="left:32px;top:365px" width="7" height="10" viewBox="0 0 7 10"><path d="M1.3 1.3 L5.3 5.3 L1.3 9.3" fill="none" stroke="#a6a6a6" stroke-width="1.6"/></svg><div class="ic" style="left:47px;top:361px"><svg width="16" height="16" viewBox="0 0 16 16">
<rect x="0.5" y="3.3" width="15" height="9.2" fill="#45b4f8" stroke="#2a70b0"/>
<rect x="1" y="6.1" width="11" height="0.9" fill="#fff"/>
<rect x="11" y="6.1" width="1" height="6" fill="#fff"/>
<rect x="1" y="7" width="10" height="5" fill="#a8dcff"/>
<rect x="7" y="13" width="2" height="0.7" fill="#b8c0c8"/>
<rect x="4" y="14" width="8" height="0.9" fill="#7a8898"/>
</svg></div><div class="t" style="left:68px;top:360px;transform:scaleX(1.0366)">Monitors</div>
<svg class="chev" style="left:32px;top:383px" width="7" height="10" viewBox="0 0 7 10"><path d="M1.3 1.3 L5.3 5.3 L1.3 9.3" fill="none" stroke="#a6a6a6" stroke-width="1.6"/></svg><div class="ic" style="left:47px;top:379px"><svg width="16" height="16" viewBox="0 0 16 16">
<rect x="3.5" y="1.2" width="10.5" height="4.5" fill="#60c0fa" stroke="#1f6fa8" stroke-width="0.8"/>
<rect x="2.3" y="5.2" width="12.2" height="7.3" fill="url(#mg)" stroke="#1f6fa8" stroke-width="0.8"/>
<rect x="1" y="13.3" width="15" height="2.2" fill="#e4e4e4"/>
<rect x="4.8" y="13.1" width="7.2" height="2.6" fill="#30c040"/>
</svg></div><div class="t" style="left:68px;top:378px;transform:scaleX(0.9846)">Network adapters</div>
<svg class="chev" style="left:32px;top:401px" width="7" height="10" viewBox="0 0 7 10"><path d="M1.3 1.3 L5.3 5.3 L1.3 9.3" fill="none" stroke="#a6a6a6" stroke-width="1.6"/></svg><div class="ic" style="left:47px;top:397px"><svg width="16" height="16" viewBox="0 0 16 16">
<rect x="0.2" y="4" width="15.6" height="8.9" rx="0.5" fill="#e4e4e4"/>
<rect x="0.2" y="4" width="15.6" height="2" fill="#6a6a6a"/>
<rect x="0.2" y="10.9" width="3.8" height="2" fill="#5a5a5a"/><rect x="12" y="10.9" width="3.8" height="2" fill="#5a5a5a"/>
<rect x="0.2" y="6" width="0.8" height="5" fill="#9a9a9a"/><rect x="15" y="6" width="0.8" height="5" fill="#9a9a9a"/>
<rect x="4" y="2.9" width="2" height="3.1" fill="#9ad0ff"/><rect x="6" y="2.9" width="2" height="3.1" fill="#1a7ae8"/><rect x="8" y="2.9" width="2" height="3.1" fill="#20c040"/><rect x="10" y="2.9" width="2.1" height="3.1" fill="#1a88f0"/>
<rect x="12.6" y="4.6" width="1.6" height="1.4" fill="#20f020"/>
<rect x="3.1" y="8" width="9.8" height="1.5" fill="#1a1a1a"/>
<rect x="4" y="9.5" width="8.1" height="4" fill="#fff"/>
<rect x="4" y="13.3" width="8.1" height="0.6" fill="#c8c8c8"/>
</svg></div><div class="t" style="left:68px;top:396px;transform:scaleX(0.9794)">Print queues</div>
<svg class="chev" style="left:32px;top:419px" width="7" height="10" viewBox="0 0 7 10"><path d="M1.3 1.3 L5.3 5.3 L1.3 9.3" fill="none" stroke="#a6a6a6" stroke-width="1.6"/></svg><div class="ic" style="left:47px;top:415px"><svg width="16" height="16" viewBox="0 0 16 16">
<path d="M0 0 L13 0 L15 2 L15 15 L0 15 Z" fill="#363636"/>
<rect x="1" y="1" width="13" height="13" fill="#2c2c2c"/>
<rect x="3" y="3" width="9" height="9" fill="url(#chipg)"/>
<rect x="12" y="12" width="2" height="2" fill="#e8a830"/>
<g fill="#e8a830"><rect x="15" y="2" width="1" height="1"/><rect x="15" y="4" width="1" height="1"/><rect x="15" y="6" width="1" height="1"/><rect x="15" y="8" width="1" height="1"/><rect x="15" y="10" width="1" height="1"/><rect x="15" y="12" width="1" height="1"/><rect x="0" y="15" width="1" height="1"/><rect x="2" y="15" width="1" height="1"/><rect x="4" y="15" width="1" height="1"/><rect x="6" y="15" width="1" height="1"/><rect x="8" y="15" width="1" height="1"/><rect x="10" y="15" width="1" height="1"/><rect x="12" y="15" width="1" height="1"/></g>
</svg></div><div class="t" style="left:68px;top:414px;transform:scaleX(0.9279)">Processors</div>
<svg class="chev" style="left:32px;top:437px" width="7" height="10" viewBox="0 0 7 10"><path d="M1.3 1.3 L5.3 5.3 L1.3 9.3" fill="none" stroke="#a6a6a6" stroke-width="1.6"/></svg><div class="ic" style="left:47px;top:433px"><svg width="16" height="16" viewBox="0 0 16 16">
<rect x="1.6" y="0.5" width="7.3" height="13.5" rx="0.8" fill="#fafafa" stroke="#a8a8a8" stroke-width="0.9"/>
<rect x="3.3" y="3" width="3.2" height="11" fill="#eaeaf2" stroke="#b4b4bc" stroke-width="0.5"/>
<circle cx="5" cy="3" r="1.2" fill="#50c020"/>
<rect x="0" y="15" width="9.7" height="1" fill="#4a4a4a"/>
<path d="M10 8 L2.3 15.3" stroke="#d88a10" stroke-width="2.4" stroke-linecap="round"/>
<path d="M9.8 8.3 L2.8 15" stroke="#ffe060" stroke-width="0.9"/>
<circle cx="12.3" cy="6" r="3.5" fill="url(#gold)" stroke="#b87010" stroke-width="0.7"/>
<path d="M11.6 5.1 L13.8 7.3" stroke="#6a4a20" stroke-width="2.2" stroke-linecap="round"/>
<path d="M11.8 5.3 L13.5 7" stroke="#fff" stroke-width="1" stroke-linecap="round"/>
</svg></div><div class="t" style="left:68px;top:432px;transform:scaleX(0.9579)">Security devices</div>
<svg class="chev" style="left:32px;top:455px" width="7" height="10" viewBox="0 0 7 10"><path d="M1.3 1.3 L5.3 5.3 L1.3 9.3" fill="none" stroke="#a6a6a6" stroke-width="1.6"/></svg><div class="ic" style="left:47px;top:451px"><svg width="16" height="16" viewBox="0 0 16 16">
<rect x="4.4" y="1.4" width="7.4" height="12.6" rx="0.8" fill="#fafafa" stroke="#a4a4a4" stroke-width="0.9"/>
<rect x="6.4" y="4" width="3.4" height="10" fill="#ececf0" stroke="#9a9a9e" stroke-width="0.8"/>
<circle cx="8" cy="3.8" r="1.1" fill="#60c030"/>
<rect x="5.2" y="14" width="5.6" height="1" fill="#2a2a2a"/>
<rect x="3" y="15" width="10" height="0.9" fill="#4a4a4a"/>
</svg></div><div class="t" style="left:68px;top:450px;transform:scaleX(0.9574)">Software devices</div>
<svg class="chev" style="left:31px;top:475px" width="10" height="7" viewBox="0 0 10 7"><path d="M0.6 0.7 L4.6 4.7 L8.6 0.7" fill="none" stroke="#3a3a3a" stroke-width="1.6"/></svg><div class="ic" style="left:47px;top:469px"><svg width="16" height="16" viewBox="0 0 16 16">
<path d="M4.8 5 L11 0 L11 16 L4.8 11 Z" fill="url(#cone)"/>
<rect x="10.2" y="0" width="1" height="16" fill="#b0b8c4"/>
<rect x="1" y="5" width="3.8" height="6" fill="url(#rear)"/>
<rect x="2.9" y="5" width="0.9" height="6" fill="#202428"/>
</svg></div><div class="t" style="left:68px;top:468px;transform:scaleX(0.9905)">Sound, video and game controllers</div>
<div class="ic" style="left:66px;top:487px"><svg width="16" height="16" viewBox="0 0 16 16">
<path d="M4.8 4.6 L11 -0.2 L11 13 L4.8 10.8 Z" fill="url(#cone)"/>
<rect x="10.2" y="0" width="1" height="9" fill="#b0b8c4"/>
<rect x="0.9" y="4.6" width="3.9" height="6.2" fill="url(#rear)"/>
<rect x="2.8" y="4.6" width="0.9" height="6.2" fill="#202428"/>
<path d="M11 6.6 L16 15.8 L6 15.8 Z" fill="url(#warn)" stroke="#c09000" stroke-width="0.6" stroke-linejoin="round"/>
<rect x="10.4" y="9.3" width="1.3" height="3.4" fill="#1a1a1a"/>
<rect x="10.4" y="13.5" width="1.3" height="1.1" fill="#1a1a1a"/>
</svg></div><div class="t" style="left:87px;top:486px;transform:scaleX(0.9827)">Intel(R) Display Audio</div>
<div class="ic" style="left:66px;top:505px"><svg width="16" height="16" viewBox="0 0 16 16">
<path d="M4.8 4.6 L11 -0.2 L11 13 L4.8 10.8 Z" fill="url(#cone)"/>
<rect x="10.2" y="0" width="1" height="9" fill="#b0b8c4"/>
<rect x="0.9" y="4.6" width="3.9" height="6.2" fill="url(#rear)"/>
<rect x="2.8" y="4.6" width="0.9" height="6.2" fill="#202428"/>
<path d="M11 6.6 L16 15.8 L6 15.8 Z" fill="url(#warn)" stroke="#c09000" stroke-width="0.6" stroke-linejoin="round"/>
<rect x="10.4" y="9.3" width="1.3" height="3.4" fill="#1a1a1a"/>
<rect x="10.4" y="13.5" width="1.3" height="1.1" fill="#1a1a1a"/>
</svg></div><div class="t" style="left:87px;top:504px;transform:scaleX(0.9735)">NVIDIA Virtual Audio Device (Wave Extensible) (WDM)</div>
<div class="sel" style="top:522px"></div><div class="ic" style="left:66px;top:523px"><svg width="16" height="16" viewBox="0 0 16 16">
<path d="M4.8 4.6 L11 -0.2 L11 13 L4.8 10.8 Z" fill="url(#cone)"/>
<rect x="10.2" y="0" width="1" height="9" fill="#b0b8c4"/>
<rect x="0.9" y="4.6" width="3.9" height="6.2" fill="url(#rear)"/>
<rect x="2.8" y="4.6" width="0.9" height="6.2" fill="#202428"/>
<path d="M11 6.6 L16 15.8 L6 15.8 Z" fill="url(#warn)" stroke="#c09000" stroke-width="0.6" stroke-linejoin="round"/>
<rect x="10.4" y="9.3" width="1.3" height="3.4" fill="#1a1a1a"/>
<rect x="10.4" y="13.5" width="1.3" height="1.1" fill="#1a1a1a"/>
</svg></div><div class="t" style="left:87px;top:522px;transform:scaleX(1.0075)">Realtek High Definition Audio</div>
<div class="ic" style="left:66px;top:541px"><svg width="16" height="16" viewBox="0 0 16 16">
<path d="M4.8 4.6 L11 -0.2 L11 13 L4.8 10.8 Z" fill="url(#cone)"/>
<rect x="10.2" y="0" width="1" height="9" fill="#b0b8c4"/>
<rect x="0.9" y="4.6" width="3.9" height="6.2" fill="url(#rear)"/>
<rect x="2.8" y="4.6" width="0.9" height="6.2" fill="#202428"/>
<path d="M11 6.6 L16 15.8 L6 15.8 Z" fill="url(#warn)" stroke="#c09000" stroke-width="0.6" stroke-linejoin="round"/>
<rect x="10.4" y="9.3" width="1.3" height="3.4" fill="#1a1a1a"/>
<rect x="10.4" y="13.5" width="1.3" height="1.1" fill="#1a1a1a"/>
</svg></div><div class="t" style="left:87px;top:540px;transform:scaleX(0.9812)">WebcamMax, WDM Video Capture</div>
<svg class="chev" style="left:32px;top:563px" width="7" height="10" viewBox="0 0 7 10"><path d="M1.3 1.3 L5.3 5.3 L1.3 9.3" fill="none" stroke="#a6a6a6" stroke-width="1.6"/></svg><div class="ic" style="left:47px;top:559px"><svg width="16" height="16" viewBox="0 0 16 16">
<path d="M0.1 8 L7.9 0.1 L13.4 5.6 L9.9 5.6 L7.9 3.6 L3.6 8 L7.9 12.3 L9.9 10.3 L13.4 10.3 L7.9 15.8 Z" fill="#3c3c3c"/>
<path d="M2.5 5.6 L7.9 0.1 L9.6 1.8 L7.9 3.6 L4.2 7.3 Z" fill="#c8d0d8" opacity="0.85"/>
<rect x="9.1" y="7.1" width="6.8" height="1.8" fill="#3a3a3a"/>
</svg></div><div class="t" style="left:68px;top:558px;transform:scaleX(0.9829)">Storage controllers</div>
<svg class="chev" style="left:32px;top:581px" width="7" height="10" viewBox="0 0 7 10"><path d="M1.3 1.3 L5.3 5.3 L1.3 9.3" fill="none" stroke="#a6a6a6" stroke-width="1.6"/></svg><div class="ic" style="left:47px;top:577px"><svg width="16" height="16" viewBox="0 0 16 16">
<rect x="0.5" y="1.4" width="15" height="9.4" fill="url(#mg)" stroke="#2a6ea8"/>
<rect x="7" y="10.9" width="2" height="1" fill="#c0c8d0"/>
<rect x="4" y="12" width="8" height="1" fill="#7a8898"/>
<rect x="0" y="14.3" width="16" height="0.8" fill="#d4dae0"/>
<rect x="0" y="15.1" width="16" height="0.9" fill="#8a98a8"/>
</svg></div><div class="t" style="left:68px;top:576px;transform:scaleX(0.9520)">System devices</div>
<svg class="chev" style="left:32px;top:599px" width="7" height="10" viewBox="0 0 7 10"><path d="M1.3 1.3 L5.3 5.3 L1.3 9.3" fill="none" stroke="#a6a6a6" stroke-width="1.6"/></svg><div class="ic" style="left:47px;top:595px"><svg width="16" height="16" viewBox="0 0 16 16">
<rect x="5.5" y="0.5" width="5" height="4.6" fill="#e6e6ea" stroke="#8a8e98" stroke-width="1"/>
<path d="M4 4.9 L12 4.9 L12 10.3 Q12 12.6 10 13.7 L6 13.7 Q4 12.6 4 10.3 Z" fill="#54585e"/>
<rect x="4.6" y="6" width="6.8" height="1" fill="#8a8e94"/>
<rect x="7" y="13.5" width="2" height="2.4" fill="#2a2e34"/>
</svg></div><div class="t" style="left:68px;top:594px;transform:scaleX(0.9566)">Universal Serial Bus controllers</div>
<!-- status bar -->
<div style="left:4px;top:670px;width:786px;height:1px;background:#d7d7d7"></div>
<div style="left:4px;top:671px;width:786px;height:21px;background:#f0f0f0"></div>
<div style="left:4px;top:692px;width:786px;height:1px;background:#f4f4f4"></div>
<div style="left:569px;top:672px;width:1px;height:20px;background:#d5d5d5"></div>
<div style="left:702px;top:672px;width:1px;height:20px;background:#d5d5d5"></div>
<div style="left:787px;top:672px;width:1px;height:20px;background:#d5d5d5"></div>
<div style="left:0;top:693px;width:793px;height:3px;background:#a8a8a8"></div>
<div style="left:0;top:696px;width:793px;height:1px;background:#c8c2bc"></div>
<div style="left:0;top:697px;width:793px;height:1px;background:#1f6fc0"></div>
<div style="left:0;top:698px;width:793px;height:3px;background:#dcd8d4"></div>
<div style="left:489px;top:698px;width:40px;height:3px;background:#d8a8a8"></div>
<div style="left:561px;top:698px;width:76px;height:3px;background:#8a8a8a"></div>
</body></html>
